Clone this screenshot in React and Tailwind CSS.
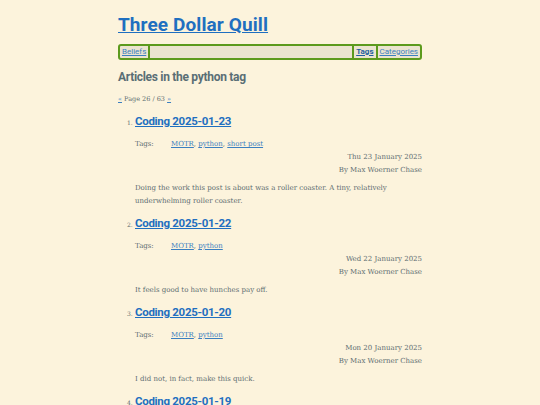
import React from "react";

const items = [
  {
    title: "Coding 2025-01-23",
    tags: ["MOTR", "python", "short post"],
    date: "Thu 23 January 2025",
    summary:
      "Doing the work this post is about was a roller coaster. A tiny, relatively underwhelming roller coaster.",
  },
  {
    title: "Coding 2025-01-22",
    tags: ["MOTR", "python"],
    date: "Wed 22 January 2025",
    summary: "It feels good to have hunches pay off.",
  },
  {
    title: "Coding 2025-01-20",
    tags: ["MOTR", "python"],
    date: "Mon 20 January 2025",
    summary: "I did not, in fact, make this quick.",
  },
  {
    title: "Coding 2025-01-19",
    tags: ["MOTR", "python"],
    date: "Sun 19 January 2025",
    summary: "",
  },
];

const sans = "font-['Roboto',sans-serif]";
const serif = "font-['DejaVu_Serif',serif]";

export default function App() {
  return (
    <div className="h-[405px] overflow-hidden bg-[#fcf3dc] text-[#5d6d71]">
      <div className="mx-auto w-[304px] pt-[12px]">
        <h1 className={`${sans} text-[19px] font-bold leading-[26px] tracking-[0.1px]`}>
          <a href="#" className="text-[#1f6fc0] underline">
            Three Dollar Quill
          </a>
        </h1>
        <nav
          className={`${sans} mt-[6px] flex h-[16px] items-stretch rounded-[3px] border-2 border-[#5c9a1d] bg-[#ebe4cf] text-[8px] leading-[12px]`}
        >
          <a href="#" className="px-[2px] text-[#3b7fc0] underline">
            Beliefs
          </a>
          <span className="w-[2px] bg-[#5c9a1d]" />
          <span className="flex-1" />
          <span className="w-[2px] bg-[#5c9a1d]" />
          <a href="#" className="px-[2px] font-bold text-[#1f5f9f] underline">
            Tags
          </a>
          <span className="w-[2px] bg-[#5c9a1d]" />
          <a href="#" className="px-[2px] text-[#3b7fc0] underline">
            Categories
          </a>
        </nav>
        <h2
          className={`${sans} mt-[9px] text-[12px] font-bold leading-[17px] tracking-[-0.3px] text-[#596e75]`}
        >
          Articles in the python tag
        </h2>
        <p className={`${serif} mt-[8px] text-[6.5px] leading-[10px]`}>
          <a href="#" className="text-[#3b7fc0] underline">
            «
          </a>{" "}
          Page 26 / 63{" "}
          <a href="#" className="text-[#3b7fc0] underline">
            »
          </a>
        </p>
        <ol className="mt-[8px] pl-[17px]">
          {items.map((it, i) => (
            <li key={i} className="mb-[6px]">
              <div className="flex items-baseline">
                <span className={`${serif} -ml-[8px] w-[8px] text-[6px]`}>
                  {i + 1}.
                </span>
                <a
                  href="#"
                  className={`${sans} text-[11.5px] font-bold leading-[18px] tracking-[-0.3px] text-[#1f6fc0] underline`}
                >
                  {it.title}
                </a>
              </div>
              <div className={`${serif} text-[7px]`}>
                <div className="mt-[8px] flex leading-[12px]">
                  <span className="w-[36px]">Tags:</span>
                  <span>
                    {it.tags.map((t, j) => (
                      <React.Fragment key={t}>
                        <a href="#" className="text-[#3b7fc0] underline">
                          {t}
                        </a>
                        {j < it.tags.length - 1 ? ", " : ""}
                      </React.Fragment>
                    ))}
                  </span>
                </div>
                <div className="mt-[1px] text-right leading-[12.5px]">
                  <div>{it.date}</div>
                  <div>By Max Woerner Chase</div>
                </div>
                {it.summary && (
                  <p className="mt-[6px] leading-[13px]">{it.summary}</p>
                )}
              </div>
            </li>
          ))}
        </ol>
      </div>
    </div>
  );
}
